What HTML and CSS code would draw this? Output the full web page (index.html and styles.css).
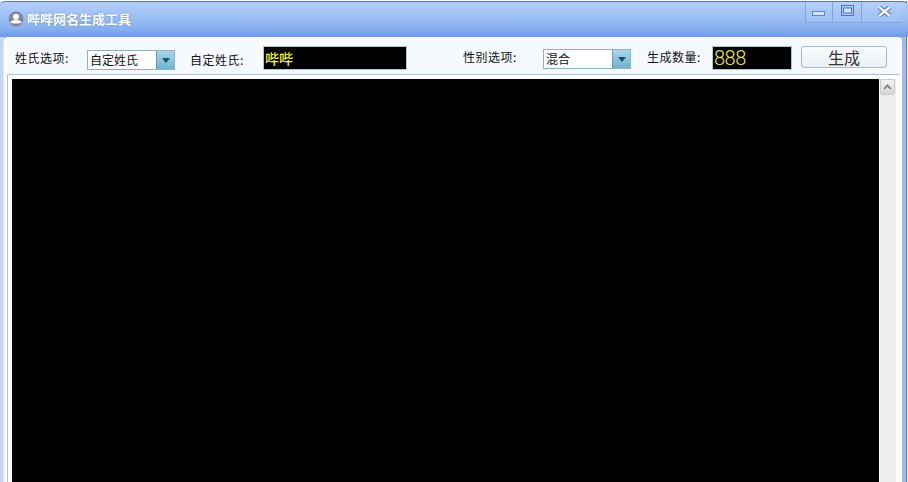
FILE: index.html
```html
<!DOCTYPE html>
<html lang="zh">
<head>
<meta charset="utf-8">
<title>哔哔网名生成工具</title>
<link rel="stylesheet" href="styles.css">
</head>
<body>
<div class="window">
  <header class="titlebar">
    <svg class="app-icon" width="16" height="16" viewBox="0 0 16 16">
      <circle cx="8" cy="8" r="7.500" fill="#83869a"/>
      <circle cx="8" cy="5.800" r="3" fill="#fff"/>
      <path d="M2 11.500c1.500-2 3.500-2.500 6-2.500s4.500.5 6 2.500c-1.500 1.300-10.500 1.300-12 0z" fill="#fff"/>
    </svg>
    <h1 class="title">哔哔网名生成工具</h1>
    <div class="win-controls">
      <div class="win-btn win-min"><svg width="14" height="6" viewBox="0 0 14 6"><rect x="0.500" y="0.500" width="12" height="4" fill="#d6e4fa" stroke="#5f86bd"/></svg></div>
      <div class="win-btn win-max"><svg width="13" height="11" viewBox="0 0 13 11"><rect x="0.500" y="0.500" width="12" height="10" fill="none" stroke="#4f77b2"/><rect x="2.500" y="3" width="8" height="5" fill="#d6e4fa" stroke="#4f77b2"/></svg></div>
      <div class="win-btn win-close"><svg width="15" height="11" viewBox="0 0 15 11"><path d="M2 1l11 9M13 1L2 10" stroke="#5878a8" stroke-width="4.500" fill="none"/><path d="M2 1l11 9M13 1L2 10" stroke="#eef4fd" stroke-width="2.500" fill="none"/></svg></div>
    </div>
  </header>
  <main class="panel">
    <form class="toolbar">
      <span class="label label-a">姓氏选项:</span>
      <div class="combo combo-a"><span class="combo-text">自定姓氏</span><span class="combo-btn"><i class="arrow"></i></span></div>
      <span class="label label-b">自定姓氏:</span>
      <div class="field field-name">哔哔</div>
      <span class="label label-c">性别选项:</span>
      <div class="combo combo-b"><span class="combo-text">混合</span><span class="combo-btn"><i class="arrow"></i></span></div>
      <span class="label label-d">生成数量:</span>
      <div class="field field-count">888</div>
      <button class="generate" type="button">生成</button>
    </form>
    <section class="output">
      <div class="console"></div>
      <div class="scrollbar">
        <div class="scroll-up"><svg width="9" height="6" viewBox="0 0 9 6"><path d="M1 5l3.500-3.500L8 5" fill="none" stroke="#6f7780" stroke-width="1.600"/></svg></div>
      </div>
    </section>
  </main>
</div>
</body>
</html>
```
FILE: styles.css
```css
* { box-sizing: border-box; }
html, body { margin: 0; height: 100%; overflow: hidden; background: #fff; }
body { font-family: "Noto Sans CJK SC", "Liberation Sans", sans-serif; font-size: 12px; color: #111; }
.window {
  width: 908px; height: 482px; display: flex; flex-direction: column;
  padding-right: 6px; padding-left: 4px;
  border-top: 1px solid #fff;
  background: linear-gradient(90deg, #c3d8f7 0, #c3d8f7 3px, #dbe7fb 3px, #dbe7fb 4px, #c3d8f7 4px) left top / 4px 100% no-repeat,
              linear-gradient(90deg, #9dbdf0 0, #9dbdf0 4px, #5d7fae 4px, #5d7fae 5px, #fff 5px) right top / 6px 100% no-repeat,
              #8fb4ef;
  position: relative;
}
.titlebar {
  height: 36px; flex: none; margin: 0 -6px 0 -4px; padding-left: 8px;
  display: flex; align-items: flex-start;
  border-top: 1px solid #55789f; border-radius: 6px 6px 0 0;
  background: linear-gradient(180deg, #b4cff8 0, #a3c4f6 30%, #8db3f0 70%, #6f9be3 100%);
}
.app-icon { margin-top: 9px; flex: none; }
.title { margin: 8px 0 0 3px; font-size: 13px; line-height: 18px; font-weight: 700; color: #fff; text-shadow: 0 0 2px #5d83c4; }
.win-controls { margin-left: auto; margin-right: 6px; display: flex; height: 21px; border-left: 1px solid #7fa3dc; border-bottom: 1px solid #7fa3dc; }
.win-btn { display: flex; align-items: center; justify-content: center; border-right: 1px solid #7fa3dc; background: linear-gradient(180deg, #b4cff8, #9fc0f4); }
.win-min { width: 27px; padding-top: 4px; }
.win-max { width: 29px; padding-bottom: 3px; }
.win-close { width: 40px; border-right: 0; padding-bottom: 1px; padding-left: 5px; }
.panel { flex: 1; min-height: 0; width: 898px; background: #fff; border-radius: 4px 4px 0 0; display: flex; flex-direction: column; }
.toolbar { height: 38px; flex: none; display: flex; align-items: flex-start; margin: 0 3px; border-bottom: 1px solid #a9c4d8; background: #f6fafe; }
.label { line-height: 16px; white-space: nowrap; font-size: 12px; letter-spacing: .5px; }
.label-a { margin: 13px 0 0 8px; width: 72px; }
.label-b { margin: 15px 0 0 15px; width: 73px; }
.label-c { margin: 12px 0 0 56px; width: 80px; }
.label-d { margin: 12px 0 0 16px; width: 65px; }
.combo { width: 88px; height: 20px; display: flex; border: 1px solid #8fb4c8; background: #fff; }
.combo-a { margin-top: 13px; }
.combo-b { margin-top: 12px; }
.combo-text { flex: 1; padding-left: 2px; line-height: 18px; font-size: 12px; }
.combo-btn { width: 18px; display: flex; align-items: center; justify-content: center; border-left: 1px solid #6f9db5; background: linear-gradient(180deg, #a9d6ea, #6db4d2); }
.arrow { width: 0; height: 0; border-left: 4px solid transparent; border-right: 4px solid transparent; border-top: 5px solid #1d4f63; margin-top: 1px; }
.field { height: 24px; margin-top: 9px; background: #000; border: 1px solid #a8c5d8; color: #ffff33; }
.field-name { width: 144px; padding-left: 1px; font-size: 14px; font-weight: 500; line-height: 23px; color: #f4ef3a; }
.field-count { width: 80px; padding-left: 1px; font-family: Roboto, "Liberation Sans", sans-serif; font-weight: 300; font-size: 20px; line-height: 22px; color: #eee640; letter-spacing: -0.5px; }
.generate {
  width: 86px; height: 22px; margin: 9px 0 0 9px; padding: 0; border: 1px solid #a3bccc; border-radius: 3px;
  background: linear-gradient(180deg, #fbfdff, #e9f0f7); color: #333;
  font-family: "Noto Sans CJK SC", sans-serif; font-size: 16px; font-weight: 400; line-height: 20px;
}
.output { flex: 1; min-height: 0; display: flex; margin-left: 3px; padding: 4px 0 0 4px; border-left: 1px solid #a9c4d8; }
.console { width: 867px; background: #000; }
.scrollbar { width: 16px; margin-left: 1px; background: #ededed; }
.scroll-up { height: 16px; width: 15px; display: flex; align-items: center; justify-content: center; background: linear-gradient(180deg, #f2f2f2, #d6d6d6); border: 1px solid #c9c9c9; border-radius: 2px; }
```
